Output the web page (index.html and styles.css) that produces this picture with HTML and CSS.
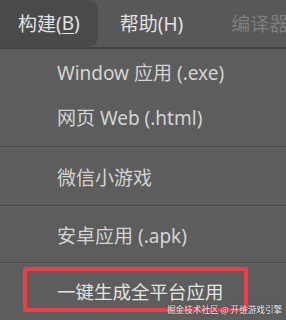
FILE: index.html
```html
<!DOCTYPE html>
<html lang="zh">
<head>
<meta charset="utf-8">
<link rel="stylesheet" href="styles.css">
</head>
<body>
<div class="screen">
  <div class="menubar">
    <div class="tab active">构建(<u>B</u>)</div>
    <div class="tab">帮助(H)</div>
    <div class="tab faded">编译器</div>
  </div>
  <div class="menu">
    <div class="item i1">Window 应用 (.exe)</div>
    <div class="item i2">网页 Web (.html)</div>
    <div class="sep"></div>
    <div class="item i3">微信小游戏</div>
    <div class="sep"></div>
    <div class="item i4">安卓应用 (.apk)</div>
    <div class="sep"></div>
    <div class="highlight">
      <div class="item i5">一键生成全平台应用</div>
    </div>
  </div>
  <div class="watermark">掘金技术社区 @ 开维游戏引擎</div>
</div>
</body>
</html>
```
FILE: styles.css
```css
html, body {
  margin: 0;
  padding: 0;
  background: #5d5d5d;
}
.screen {
  position: relative;
  width: 286px;
  height: 320px;
  overflow: hidden;
  background: #5d5d5d;
  font-family: "Noto Sans", "Noto Sans CJK SC", sans-serif;
  color: #d6d6d6;
}
.menubar {
  display: flex;
  align-items: stretch;
  height: 47px;
  background: #585858;
  border-bottom: 2px solid #454545;
  white-space: nowrap;
}
.tab {
  display: flex;
  align-items: center;
  padding: 0 18px 2px 20px;
  font-size: 19px;
  color: #e2e2e2;
}
.tab.active {
  background: #4a4a4a;
  border-radius: 0 10px 10px 0;
  padding-left: 18px;
  padding-right: 18px;
  margin-right: 2px;
}
.tab.active u {
  text-decoration-thickness: 1px;
  text-underline-offset: 3px;
}
.tab.faded {
  color: #7e7e7e;
  padding-left: 30px;
}
.menu {
  display: flex;
  flex-direction: column;
}
.item {
  display: flex;
  align-items: center;
  padding-left: 57px;
  font-size: 19px;
  color: #d4d4d4;
  white-space: nowrap;
}
.i1 { height: 46px; }
.i2 { height: 44px; }
.i3 { height: 57px; }
.i4 { height: 55px; }
.sep {
  height: 1px;
  background: #474747;
  border-bottom: 1px solid #636363;
}
.i2 + .sep { margin-top: 7px; }
.highlight {
  margin: 3px 0 0 23px;
  width: 225px;
  height: 45px;
  box-sizing: border-box;
  border: 4px solid #ee3d4a;
  border-radius: 2px;
  display: flex;
  align-items: center;
}
.i5 {
  padding-left: 30px;
  padding-top: 3px;
  font-size: 18.5px;
  color: #e4e4e4;
}
.watermark {
  position: absolute;
  left: 167px;
  top: 303px;
  font-size: 8.6px;
  line-height: 12px;
  color: #eeeeee;
  font-family: "Noto Sans CJK SC", sans-serif;
  white-space: nowrap;
  text-shadow: 0 0 2px rgba(0,0,0,0.5);
}
```
